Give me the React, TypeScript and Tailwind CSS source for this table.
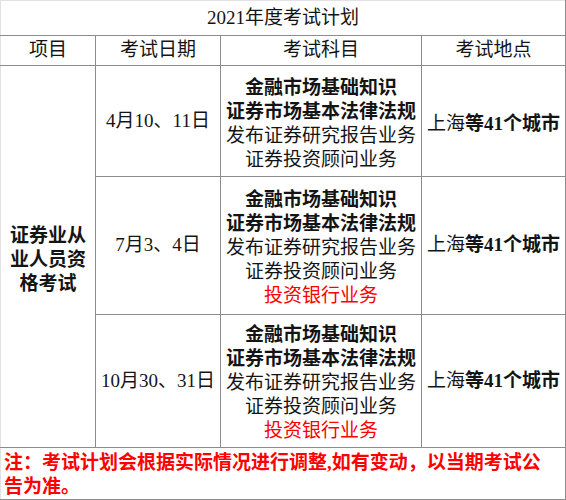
import React from "react";

const font = { fontFamily: '"Liberation Serif", "Noto Sans CJK SC", serif' };

function Subjects({ bank }: { bank: boolean }) {
  return (
    <div className="flex flex-col items-center leading-[24px]">
      <span className="font-bold">金融市场基础知识</span>
      <span className="font-bold">证券市场基本法律法规</span>
      <span>发布证券研究报告业务</span>
      <span>证券投资顾问业务</span>
      {bank && <span className="text-[#ff0000]">投资银行业务</span>}
    </div>
  );
}

function Place() {
  return (
    <span>
      上海<span className="font-bold">等41个城市</span>
    </span>
  );
}

export default function App() {
  const cell = "border border-[#8c8c8c] text-center align-middle p-0";
  return (
    <div className="w-[566px] h-[500px] bg-white text-[19px] text-[#141414]" style={font}>
      <table className="table-fixed border-collapse w-[565px] border-l border-t border-l-[#e2e2e2] border-t-[#e2e2e2]">
        <colgroup>
          <col className="w-[95px]" />
          <col className="w-[125px]" />
          <col className="w-[201px]" />
          <col className="w-[144px]" />
        </colgroup>
        <tbody>
          <tr className="h-[35px]">
            <td colSpan={4} className="border-b border-r border-[#8c8c8c] border-l-[#e2e2e2] border-t-[#e2e2e2] border-l border-t text-center align-middle pt-[1px]">
              2021年度考试计划
            </td>
          </tr>
          <tr className="h-[30px]">
            <td className={cell + " border-l-[#e2e2e2]"}>项目</td>
            <td className={cell}>考试日期</td>
            <td className={cell}>考试科目</td>
            <td className={cell}>考试地点</td>
          </tr>
          <tr className="h-[111px]">
            <td rowSpan={3} className={cell + " border-l-[#e2e2e2] font-bold leading-[24px]"}>
              <div className="flex flex-col items-center pt-[6px]">
                <span>证券业从</span>
                <span>业人员资</span>
                <span>格考试</span>
              </div>
            </td>
            <td className={cell}>4月10、11日</td>
            <td className={cell}>
              <div className="pt-[6px]">
                <Subjects bank={false} />
              </div>
            </td>
            <td className={cell}>
              <div className="pt-[6px]">
                <Place />
              </div>
            </td>
          </tr>
          <tr className="h-[138px]">
            <td className={cell}>7月3、4日</td>
            <td className={cell}>
              <div className="pt-[4px]">
                <Subjects bank={true} />
              </div>
            </td>
            <td className={cell}>
              <Place />
            </td>
          </tr>
          <tr className="h-[133px]">
            <td className={cell}>10月30、31日</td>
            <td className={cell}>
              <div className="pt-[4px]">
                <Subjects bank={true} />
              </div>
            </td>
            <td className={cell}>
              <Place />
            </td>
          </tr>
          <tr className="h-[51px]">
            <td colSpan={4} className="border border-[#8c8c8c] border-l-[#e2e2e2] text-left align-top pl-[3px] pt-[3px] leading-[24px] font-bold text-[#ff0000]">
              <div className="whitespace-nowrap">注：考试计划会根据实际情况进行调整,如有变动，以当期考试公</div>
              <div>告为准。</div>
            </td>
          </tr>
        </tbody>
      </table>
    </div>
  );
}
